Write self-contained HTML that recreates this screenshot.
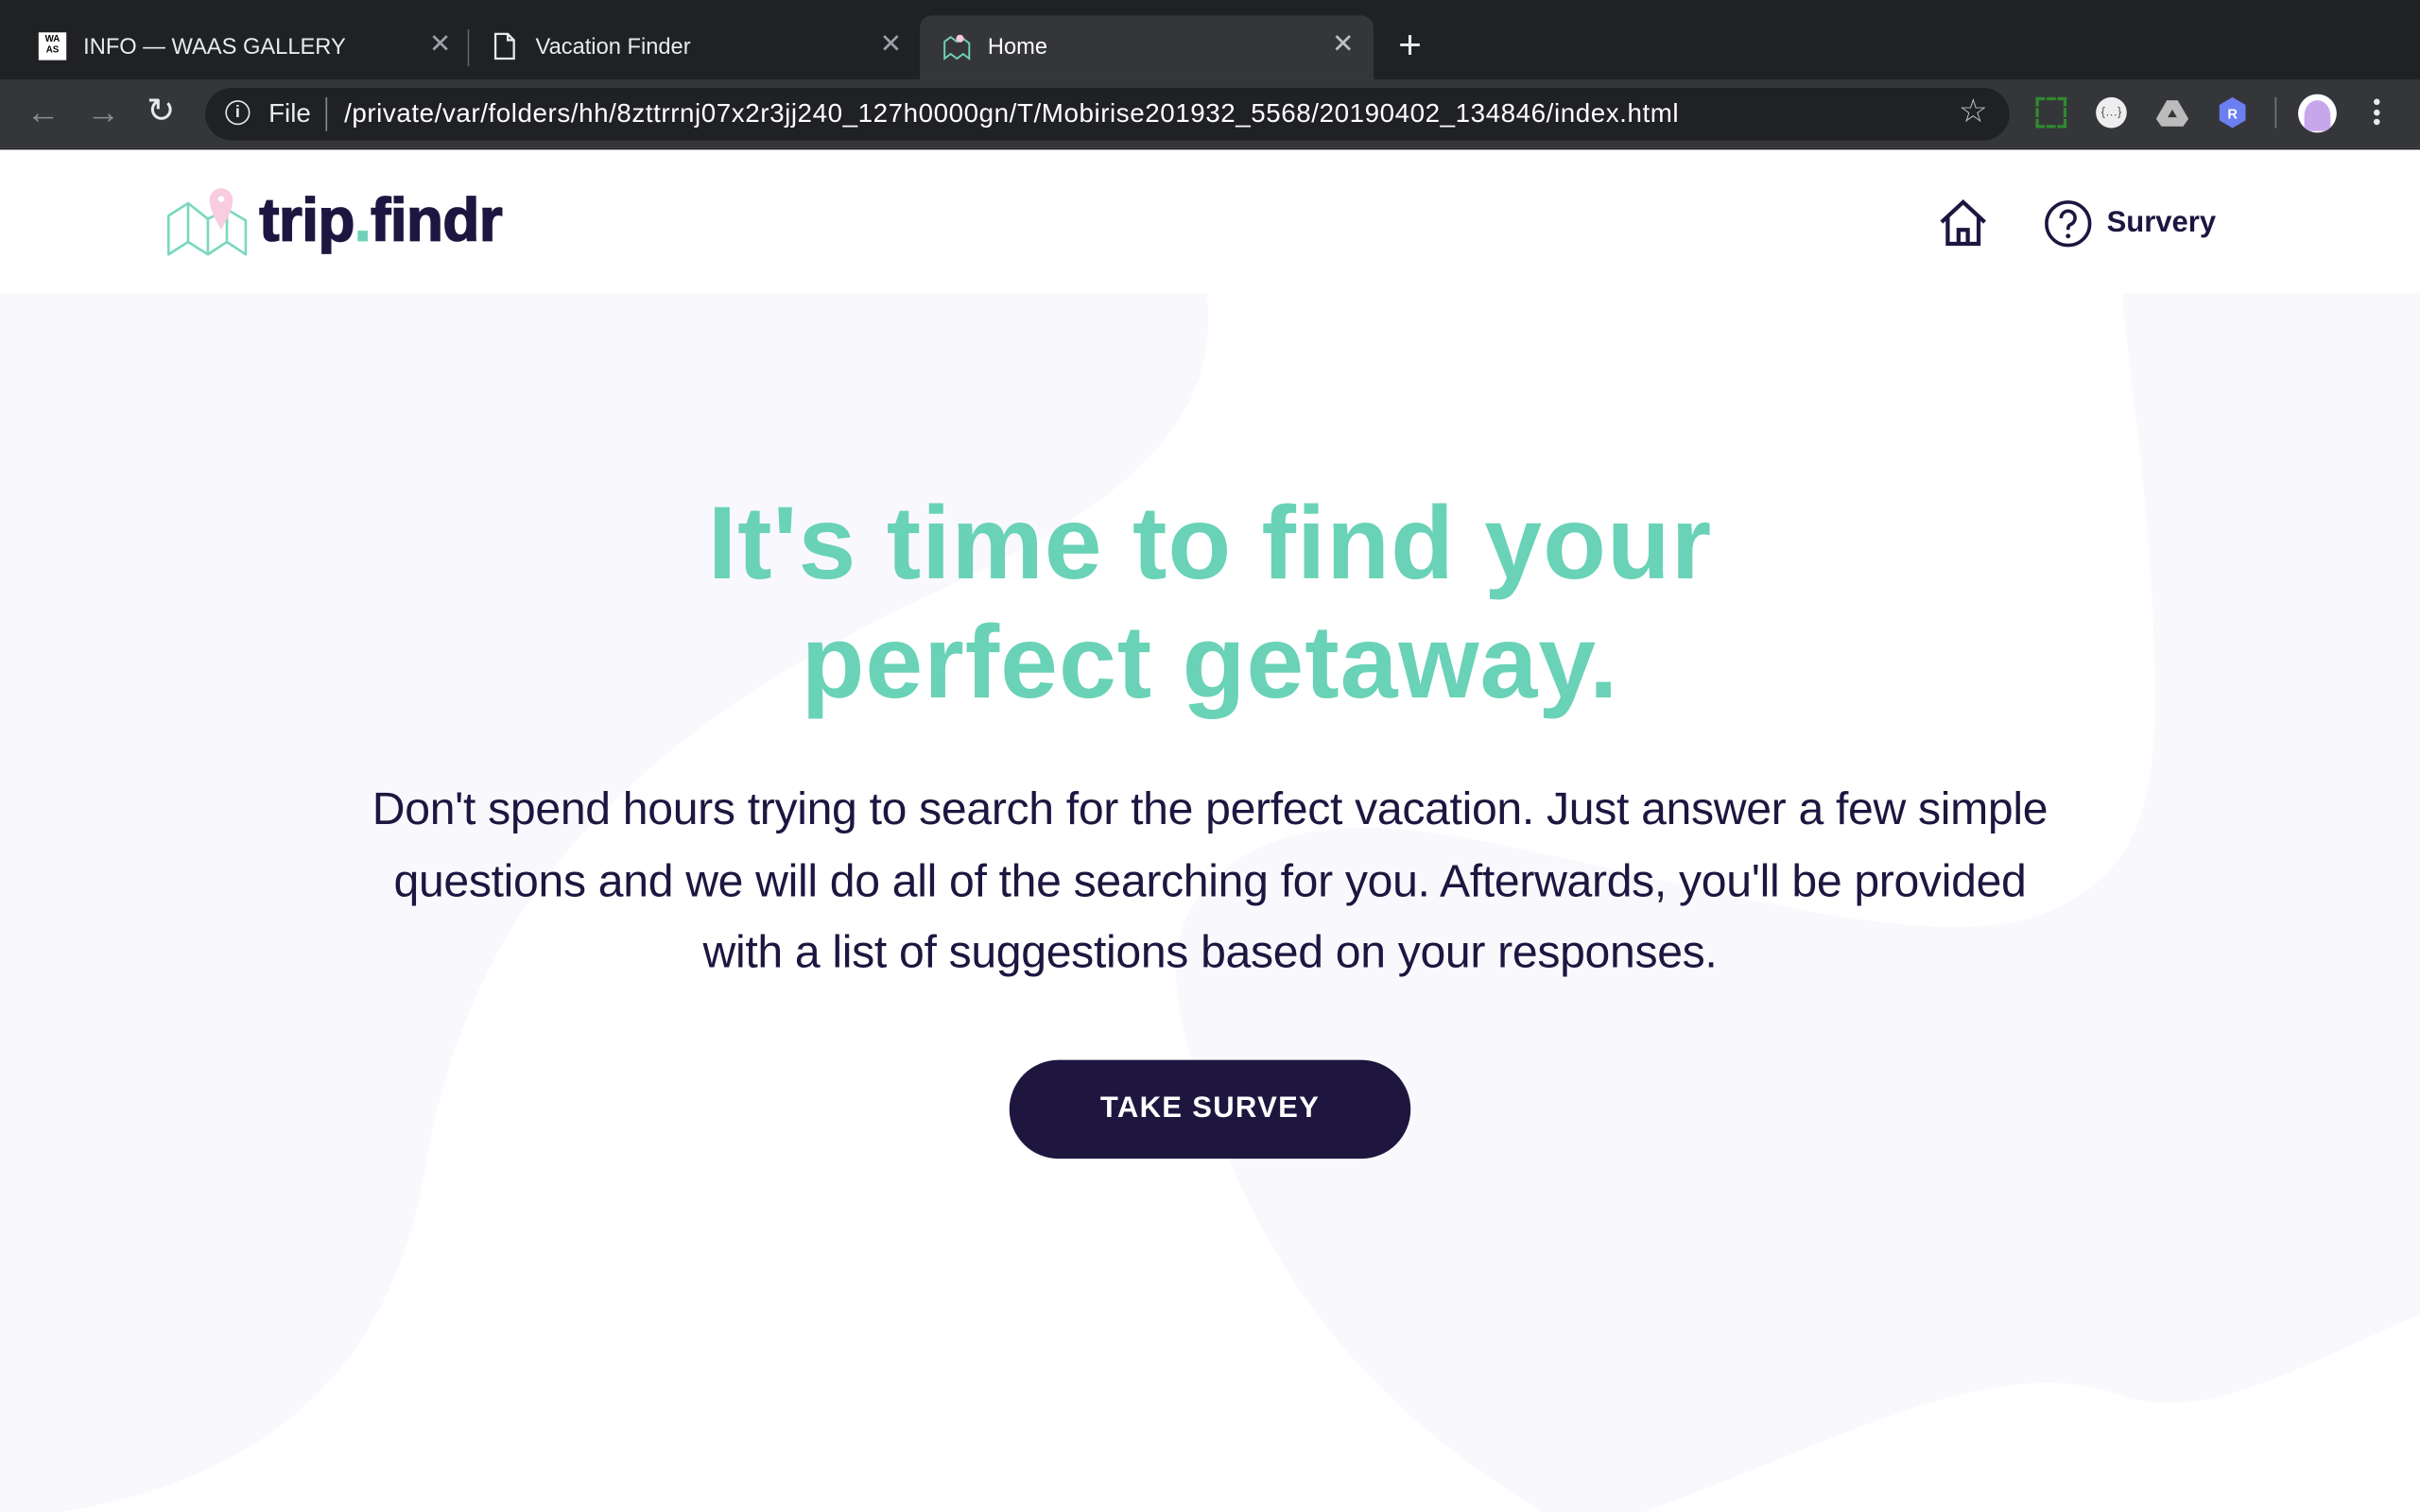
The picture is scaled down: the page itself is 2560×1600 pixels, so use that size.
<!DOCTYPE html>
<html><head><meta charset="utf-8">
<style>
html,body{margin:0;padding:0;width:2560px;height:1600px;overflow:hidden;background:#fff;}
#w{position:absolute;left:0;top:0;width:1568px;height:980px;transform:scale(1.632653);transform-origin:0 0;font-family:"Liberation Sans",sans-serif;}
.abs{position:absolute;}
.tabt{position:absolute;top:23px;font-size:14.5px;color:#e8eaed;white-space:nowrap;}
.x{position:absolute;top:19px;font-size:17px;color:#9aa0a6;}
</style></head><body><div id="w">
<!-- chrome -->
<div class="abs" style="left:0;top:0;width:1568px;height:52px;background:#202124"></div>
<div class="abs" style="left:596px;top:10px;width:294px;height:42px;background:#35363a;border-radius:8px 8px 0 0"></div>
<div class="abs" style="left:25px;top:21px;width:18px;height:18px;background:#fff;font-size:6px;font-weight:bold;line-height:7px;text-align:center;color:#000;padding-top:2px;box-sizing:border-box">WA<br>AS</div>
<div class="tabt" style="left:54px">INFO — WAAS GALLERY</div>
<div class="x" style="left:278px">✕</div>
<div class="abs" style="left:303px;top:19px;width:1px;height:24px;background:#5f6368"></div>
<svg class="abs" style="left:320px;top:21px" width="14" height="18" viewBox="0 0 14 18"><path d="M1 1h8l4 4v12H1z M9 1v4h4" fill="none" stroke="#e8eaed" stroke-width="1.4"/></svg>
<div class="tabt" style="left:347px">Vacation Finder</div>
<div class="x" style="left:570px">✕</div>
<svg class="abs" style="left:611px;top:21px" width="18" height="18" viewBox="0 0 18 18"><path d="M1 6l4-3 4 3 4-2 4 3v10l-4-3-4 3-4-3-4 3z" fill="none" stroke="#6fcfb5" stroke-width="1.2"/><circle cx="11" cy="4" r="2.5" fill="#f7c6d9"/></svg>
<div class="tabt" style="left:640px;color:#fff">Home</div>
<div class="x" style="left:863px;color:#bdc1c6">✕</div>
<div class="abs" style="left:906px;top:14px;font-size:26px;color:#e8eaed;font-weight:300">+</div>
<div class="abs" style="left:0;top:52px;width:1568px;height:44px;background:#35363a"></div>
<div class="abs" style="left:0;top:96px;width:1568px;height:1px;background:#1a1a1a"></div>
<div class="abs" style="left:17px;top:60px;font-size:22px;color:#8a8d91">←</div>
<div class="abs" style="left:56px;top:60px;font-size:22px;color:#8a8d91">→</div>
<div class="abs" style="left:95px;top:59px;font-size:22px;color:#e8eaed">↻</div>
<div class="abs" style="left:133px;top:57px;width:1169px;height:34px;background:#202124;border-radius:17px"></div>
<div class="abs" style="left:146px;top:65px;width:14px;height:14px;border:1.6px solid #e8eaed;border-radius:50%;font-size:11px;color:#e8eaed;text-align:center;line-height:14px;font-weight:bold">i</div>
<div class="abs" style="left:174px;top:64px;font-size:17px;color:#e8eaed">File</div>
<div class="abs" style="left:211px;top:63px;width:1px;height:22px;background:#888"></div>
<div class="abs" style="left:223px;top:64px;font-size:17px;color:#fff;white-space:nowrap;letter-spacing:0.35px">/private/var/folders/hh/8zttrrnj07x2r3jj240_127h0000gn/T/Mobirise201932_5568/20190402_134846/index.html</div>
<div class="abs" style="left:1269px;top:60px;font-size:21px;color:#bdc1c6">☆</div>
<div class="abs" style="left:1319px;top:63px;width:20px;height:20px;border:2px dashed #2e8b2e;box-sizing:border-box"></div>
<div class="abs" style="left:1358px;top:63px;width:20px;height:20px;border-radius:50%;background:#eee;font-size:8px;text-align:center;line-height:20px;color:#555">{…}</div>
<svg class="abs" style="left:1397px;top:64px" width="21" height="18" viewBox="0 0 21 18"><path d="M7 1h7l7 12-3.5 5h-14L0 13z" fill="#bbb"/><path d="M10.5 7l3 5h-6z" fill="#35363a"/></svg>
<svg class="abs" style="left:1437px;top:62px" width="19" height="22" viewBox="0 0 19 22"><path d="M9.5 1l8.5 5v10l-8.5 5L1 16V6z" fill="#6b7ff0"/><text x="9.5" y="15" font-size="9" font-weight="bold" fill="#fff" text-anchor="middle" font-family="Liberation Sans">R</text></svg>
<div class="abs" style="left:1474px;top:63px;width:1px;height:20px;background:#777"></div>
<div class="abs" style="left:1489px;top:61px;width:25px;height:25px;border-radius:50%;background:#fff;overflow:hidden"><div style="margin:4px 0 0 4px;width:17px;height:20px;background:#c7a7ea;border-radius:50% 50% 0 0"></div></div>
<div class="abs" style="left:1538px;top:64px;width:5px"><div style="width:4px;height:4px;border-radius:50%;background:#e8eaed;margin-bottom:2.5px"></div><div style="width:4px;height:4px;border-radius:50%;background:#e8eaed;margin-bottom:2.5px"></div><div style="width:4px;height:4px;border-radius:50%;background:#e8eaed"></div></div>
<!-- background blobs -->
<svg class="abs" style="left:0;top:0" width="1568" height="980" viewBox="0 0 1568 980">
<path d="M0 190 L782 190 C790 265 745 320 610 382 C430 465 305 570 275 760 C250 900 160 960 40 980 L0 980 Z" fill="#f9f8fd"/>
<path d="M1375 190 L1568 190 L1568 852 C1500 880 1430 925 1373 904 C1290 875 1190 935 1065 980 L1000 980 C900 920 840 850 800 760 C765 680 752 625 770 592 C800 540 860 525 960 545 C1110 575 1250 620 1325 592 C1400 560 1398 500 1395 400 C1390 300 1380 250 1375 190 Z" fill="#f9f8fd"/>
</svg>
<!-- logo -->
<svg class="abs" style="left:0;top:0" width="170" height="170" viewBox="0 0 170 170">
<path d="M109.2 139.8 L121.9 131.7 L134.7 141.9 L147 135.7 L159.2 142.9 L159.2 164.9 L147 156.8 L134.7 164.9 L121.9 156.8 L109.2 164.9 Z M121.9 131.7 V156.8 M134.7 141.9 V164.9 M147 135.7 V156.8" fill="none" stroke="#7ad8bf" stroke-width="1.6" stroke-linejoin="round"/>
<path d="M143.3 149 C139 141 135.8 136 135.8 129.5 A7.5 7.5 0 0 1 150.8 129.5 C150.8 136 147.6 141 143.3 149 Z" fill="#f8cde0"/>
<circle cx="143.3" cy="129" r="2" fill="#fff"/>
</svg>
<div class="abs" style="left:168px;top:122px;font-size:39px;font-weight:bold;color:#1e1640;letter-spacing:-0.3px;white-space:nowrap;-webkit-text-stroke:1px #1e1640">trip<span style="color:#6fd1b8;-webkit-text-stroke:1px #6fd1b8">.</span>findr</div>
<!-- nav -->
<svg class="abs" style="left:1255px;top:129px" width="34" height="31" viewBox="0 0 34 31"><path d="M3 15 L17 2 L31 15 M7 11.5 V29 H27 V11.5 M14 29 V20 H20 V29" fill="none" stroke="#1e1640" stroke-width="2.6" stroke-linejoin="miter"/></svg>
<svg class="abs" style="left:1324px;top:129px" width="32" height="32" viewBox="0 0 32 32"><circle cx="16" cy="16" r="14" fill="none" stroke="#1e1640" stroke-width="2.2"/><path d="M11.5 12.5 A4.5 4.5 0 1 1 17.5 16.5 C16.2 17.2 16 18 16 20" fill="none" stroke="#1e1640" stroke-width="2.2"/><circle cx="16" cy="24" r="1.5" fill="#1e1640"/></svg>
<div class="abs" style="left:1365px;top:134px;font-size:19px;font-weight:bold;color:#1e1640">Survery</div>
<!-- hero -->
<div class="abs" style="left:0;top:314px;width:1568px;text-align:center;font-size:67px;font-weight:bold;color:#69d2b7;line-height:77px;letter-spacing:0.6px">It's time to find your<br>perfect getaway.</div>
<div class="abs" style="left:0;top:502px;width:1568px;text-align:center;font-size:29.5px;color:#1e1640;line-height:46.5px;letter-spacing:-0.2px">Don't spend hours trying to search for the perfect vacation. Just answer a few simple<br>questions and we will do all of the searching for you. Afterwards, you'll be provided<br>with a list of suggestions based on your responses.</div>
<div class="abs" style="left:654px;top:687px;width:260px;height:64px;border-radius:32px;background:#1f1640;color:#fff;font-size:19px;font-weight:bold;letter-spacing:0.8px;text-align:center;line-height:64px">TAKE SURVEY</div>
</div></body></html>
